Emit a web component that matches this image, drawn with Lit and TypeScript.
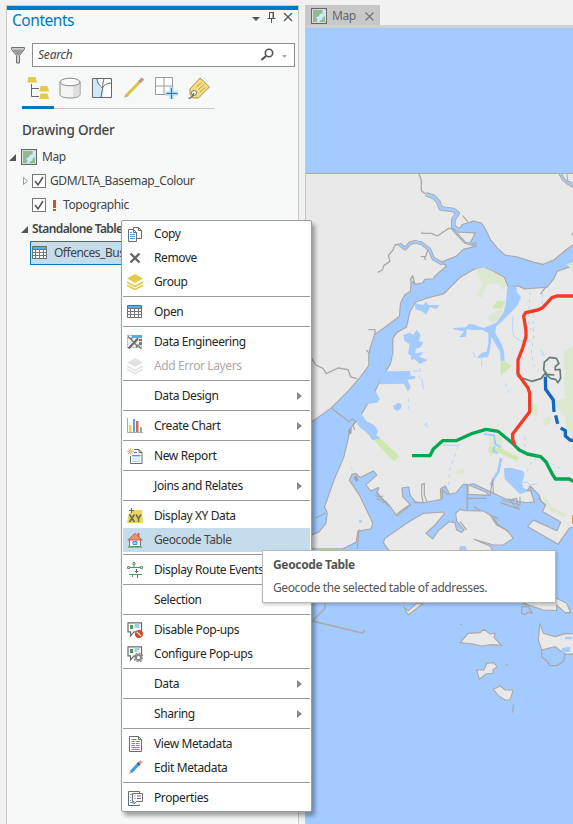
import { LitElement, html, svg, css, nothing } from "lit";
import { customElement, property } from "lit/decorators.js";

const G = "#6b6b6b";
const icons: Record<string, unknown> = {
  copy: svg`<path d="M6.500 12.500v-11h5l3 3v8z" fill="#fff" stroke="${G}"/><path d="M11.500 1.500v3h3" fill="none" stroke="${G}"/><path d="M1.500 15.500v-12h5l3 3v9z" fill="#fff" stroke="${G}"/><path d="M6.500 3.500v3h3" fill="none" stroke="${G}"/><path d="M3 8.500h5M3 10.500h5M3 12.500h5M3 6.500h2" stroke="#4a9bd4"/>`,
  remove: svg`<path d="M3.500 3.500l9 9M12.500 3.500l-9 9" stroke="#666" stroke-width="2.400"/>`,
  group: svg`<path d="M0 4.500L8 0l8 4.500L8 9z" fill="#e3cb45"/><path d="M0 8l8 4.500L16 8M0 11.200l8 4.300 8-4.300" fill="none" stroke="#e3cb45" stroke-width="1.700"/>`,
  error: svg`<path d="M0 4.500L8 0l8 4.500L8 9z" fill="#e3e3e3"/><path d="M0 8l8 4.500L16 8M0 11.200l8 4.300 8-4.300" fill="none" stroke="#e3e3e3" stroke-width="1.700"/>`,
  table: svg`<path d="M.5 1.500h14v12H.5z" fill="#fff" stroke="${G}"/><path d="M1 2h13v2.500H1z" fill="#55aee8"/><path d="M0 4.500h15M0 7.500h15M0 10.500h15M3.500 4.500v9M7.500 4.500v9M11.500 4.500v9" stroke="#777"/>`,
  engineering: svg`<path d="M.5 1.500h14v12H.5z" fill="#eee" stroke="#aaa" stroke-dasharray="2 1"/><path d="M5 1h10v3H5z" fill="#55aee8"/><path d="M8 5h3v2H8z" fill="#e6c832"/><path d="M12 5h3v2h-3z" fill="#d8482b"/><path d="M12 8h3v3h-3z" fill="#5a9a56"/><path d="M11 4.500l-9.500 10" stroke="#666" stroke-width="2"/><path d="M3.500 4.500l7 8" stroke="#777" stroke-width="1.300"/><path d="M1 2.500l2.500 2.500 2-1.500M9 13.500l2-2.500 3.500 4" fill="none" stroke="#777" stroke-width="1.300"/>`,
  chart: svg`<path d="M.5 0v14.500H16" fill="none" stroke="#aaa"/><path d="M2 7h2.500v7H2z" fill="#e6cf4a"/><path d="M6 1h2v13H6z" fill="#4aa6e4"/><path d="M9 3h2.500v11H9z" fill="#d9684a"/><path d="M13 9h2v5h-2z" fill="#88b98a"/>`,
  report: svg`<path d="M7 1.500h5l3 3v11H3.500V8" fill="#fff" stroke="${G}"/><path d="M12 1.500v3h3M7 4.500h3" fill="none" stroke="${G}"/><path d="M5 7h8.500v7H5z" fill="#b9dcf3"/><path d="M5 7.500h8.500" stroke="#4a9bd4"/><path d="M5 10h8.500M5 12h8.500" stroke="#fff"/><path d="M3.500 0v7M0 3.500h7M1 1l5 5M6 1L1 6" stroke="#e0c95e"/>`,
  xy: svg`<path d="M6 2h9l1 13H0L1.500 6z" fill="#ecd655"/><path d="M4.500 0v5M2 2.500h5" stroke="#666"/><path d="M2.500 6.500l5 7.500M7.500 6.500l-5 7.500M9 6.500l2.500 4v3.500M14 6.500l-2.500 4" fill="none" stroke="#666" stroke-width="1.500"/>`,
  house: svg`<path d="M2.500 8v6.500h11V8" fill="#fff" stroke="#777"/><path d="M10.500 1h2v4h-2z" fill="#d9603f"/><path d="M.8 8L8 1.500 15.200 8z" fill="#e99179" stroke="#cf5f43"/><path d="M6 9.500h4v3H6z" fill="#9bd0f4" stroke="#3b97d3"/><path d="M1 15h14" stroke="#55a855" stroke-width="1.300"/>`,
  route: svg`<path d="M2 5.500h12M7 3v3M2 12.500h13M5.500 12.500v2.500M10.500 12.500v3.500" stroke="#4f9457" fill="none"/><path d="M.6 4.600h2v2h-2zM13.400 4.600h2v2h-2zM6 .6h2v2H6z" fill="#fff" stroke="#4f9457"/><path d="M9.500 7v4M7.800 9.500h3.400" stroke="#666"/>`,
  popOff: svg`<path d="M1 .8h13.500v9H7l-3.500 4V9.800H1z" fill="#fff" stroke="${G}" stroke-width="1.200"/><path d="M3 3h3v4H3z" fill="#4c9a5a"/><path d="M7.500 3h5M7.500 5h5" stroke="#4a9bd4"/><circle cx="12" cy="12" r="4" fill="#cf4a26"/><path d="M9.800 9.800l4.400 4.400" stroke="#fff" stroke-width="1.200"/>`,
  popCfg: svg`<path d="M1 .8h13.500v9H7l-3.500 4V9.800H1z" fill="#fff" stroke="${G}" stroke-width="1.200"/><path d="M3 3h3v4H3z" fill="#4c9a5a"/><path d="M7.500 3h5M7.500 5h3" stroke="#4a9bd4"/><circle cx="11.500" cy="11.500" r="4.300" fill="none" stroke="#888" stroke-width="1.500" stroke-dasharray="1.900 1.400"/><circle cx="11.500" cy="11.500" r="2.600" fill="#fff" stroke="#888" stroke-width="2"/>`,
  view: svg`<path d="M2.500.5h9l3 3v12h-12z" fill="#fff" stroke="${G}"/><path d="M11.500.5v3h3" fill="none" stroke="${G}"/><path d="M4.500 3.500h5M4.500 5.500h3M9 5.500h3.500M4.500 7.500h3.500M9 7.500h3.500M4.500 9.500h3.500M9 9.500h3.500M4.500 11.500h8M4.500 13.500h8" stroke="#3f9fe0"/>`,
  edit: svg`<path d="M1.500 14.500L4 10.500l2 2z" fill="#c9a886"/><path d="M4 12L11.500 4" stroke="#3e9ddd" stroke-width="3.200"/><path d="M11 4.500l1.500-1.500" stroke="#555" stroke-width="3.400"/><path d="M12.600 2.900L14.500 1.200" stroke="#dea08f" stroke-width="3"/>`,
  props: svg`<path d="M6 15.500H1.500V1.500h11V3M1.500 15.500h11v-1" fill="none" stroke="${G}"/><path d="M3 4.500h2M3 7.500h1M3 10.500h1M3 12.500h3" stroke="#4a9bd4"/><path d="M5.500 3.500h10v8H9.500l-2.500 2.500v-2.500H5.500z" fill="#fff" stroke="${G}"/><path d="M7.500 6h1M10 6h4M7.500 8.500h1M10 8.500h4" stroke="#7b5f8d"/>`,
  map: svg`<path d="M.6.6h14.800v14.800H.6z" fill="#fff" stroke="#666" stroke-width="1.200"/><path d="M2 2h12v12H2z" fill="#8fba92"/><path d="M11.500 2H14v6l-2 1-1 3-2 .5L8.500 14H5.500l1-2.500-1.500-2L8 8l1-2 2.500-1z" fill="#cfe8f8"/>`,
  list: svg`<path d="M1.500 0h7l1.500 5.500H0zM13.500 9h7L22 14.500H12.500zM13.500 16.500h7L22 22H12.500z" fill="#e3cb45"/><path d="M4.500 7v12.500h7.500M4.500 11.500h7.500" fill="none" stroke="#666"/>`,
  source: svg`<path d="M1 5v12.500C1 19.500 5 21 11 21s10-1.500 10-3.500V5z" fill="#f3f3f3" stroke="#888"/><path d="M14 8.500c4 0 6.500-2 6.500-2V18s-2 2-6.500 2z" fill="#dedede"/><ellipse cx="11" cy="5" rx="10" ry="3.800" fill="#fafafa" stroke="#888"/>`,
  select: svg`<path d="M1.600 1.600h18.800v18.800H1.600z" fill="#fff"/><path d="M2 2h5l2 6 4 4-1 8.500H2z" fill="#cfe9f8"/><path d="M6 1.500c0 5 3 7 4.500 8.500s1 2 .5 4-.5 4-1 6M11 11c3-4 6-4.500 9.500-5M12 10.500c-1-3 .5-6 1-9" fill="none" stroke="#666"/><path d="M1.500 1.500h19v19h-19z" fill="none" stroke="#666"/>`,
  pencil: svg`<path d="M1 21l2-5 3 3z" fill="#bbb296"/><path d="M4 18L17 4.500" stroke="#dcc545" stroke-width="3.200"/><path d="M16.500 5L18 3.500" stroke="#999" stroke-width="3.300"/><path d="M18 3.500l2-2" stroke="#dc8a7d" stroke-width="3.200"/>`,
  snap: svg`<path d="M.5.5h17v17H.5zM9 .5v17M.5 9h17" fill="#fff" stroke="#999"/><path d="M16.500 10v13M10.500 16.500h13" stroke="#a9d8f5" stroke-width="4"/><path d="M16.500 11v11M11.500 16.500h11" stroke="#3d7795"/>`,
  tag: svg`<path d="M12 1l9.500 9-11 11H5l-3-3.500V12z" fill="#f1dc85" stroke="#b1923c"/><path d="M8.500 10l5-4.500M10 13l6-5.500M12 15l5.500-4.500" stroke="#bfa148"/><circle cx="6" cy="16" r="2.500" fill="#fff" stroke="#777"/><path d="M6 16c-1 3-3 5-5.500 5.500" fill="none" stroke="#666" stroke-width="1.300"/>`,
  filter: svg`<path d="M.6.600h12.800v1.800L8.400 8.500V16H5.600V8.500L.6 2.400z" fill="#ddd" stroke="#666"/><path d="M1.500 2.500h11L8 8.300H6z" fill="#999"/>`,
};

const icon = (name: string, w = 16, h = w) =>
  html`<svg width=${w} height=${h} viewBox="0 0 ${w} ${h}">${icons[name] ?? nothing}</svg>`;

@customElement("menu-item")
class MenuItem extends LitElement {
  @property() label = "";
  @property() icon = "";
  @property({ type: Boolean }) sub = false;
  static styles = css`
    :host { display: flex; align-items: center; height: 24px; padding-left: 4px; color: #262626; }
    :host([active]) { background: #c5dced; color: #444; }
    :host([off]) { color: #aaa; }
    .icon { width: 16px; height: 16px; margin-right: 11px; flex: none; }
    .label { flex: 1; white-space: nowrap; }
    .arrow { width: 0; border: 4px solid transparent; border-left: 5px solid #888; border-right: 0; margin-right: 8px; }
  `;
  render() {
    return html`<div class="icon">${this.icon ? icon(this.icon) : nothing}</div>
      <span class="label">${this.label}</span>${this.sub ? html`<i class="arrow"></i>` : nothing}`;
  }
}

// Chart coordinates are three units per pixel, origin at window point (300,170).
const seaPaths = [
  "M208 620V560L211 538 225 495 232 490 260 470 300 440 303 400 316 375 333 365 335 335 345 345 370 340 375 330 402 328 405 320 440 290 438 283 425 278 470 260 490 240 530 230 528 215 510 222 520 205 528 187 475 185 488 165 520 155 543 160 553 175 570 210 590 235 615 257 650 262 700 278 728 285 765 270 800 240 840 212V282L800 292 770 303 760 325 740 350 675 355 655 346 625 348 615 322 580 302 550 292 520 297 480 320 430 370 390 380 345 395 328 425 318 470 290 486 276 505 277 550 270 580 240 630 220 670 190 720 150 775 130 860 100 930 72 1010 80 1030 76 1060 55 1085 30 1095H0V770L35 758 95 715 150 660 180 625 210 585z",
  "M150 930L157 915 168 912 180 925 220 905 228 915 195 945 212 965 235 955 228 970 265 1005 290 1040 335 1005 310 980 308 955 325 953 328 975 345 997 370 1000 425 990 423 958 435 950 448 975 470 970 490 945 502 945 502 975 570 978 560 965 510 945 520 943 577 970 620 990 680 1000 705 997 690 950 715 975 722 995 735 1005 725 1025 780 1057 770 1080 700 1048 680 1070 775 1125 810 1075 840 1070V2100H0V1138L130 1138 170 1118 175 1085 215 1078 220 1058 180 975z"
];
const landPaths = [
  "M370 158L375 145 440 100 490 70 550 66 553 72 525 105 498 130 518 147 535 122 568 95 585 98 590 120 605 127 612 120 590 93 587 70 600 58 615 62 670 63 690 75 710 105 740 120 760 145 730 165 700 165 640 147 690 168 710 200 400 200z",
  "M600 458L625 430 660 428 672 418 690 432 705 430 702 442 724 466 695 464 665 468 638 462z",
  "M650 540L672 540 680 520 700 518 712 530 700 538 698 550 678 552 658 568z",
  "M700 598L720 588 735 600 760 600 750 630 735 630 712 614z",
  "M840 400L850 430 885 440 920 430 970 435V490L915 493 885 470 845 480 835 450z",
  "M790 340L850 360 890 362 890 345 915 368 932 368 920 340 880 320z",
  "M430 350L445 375 490 340 470 340 445 362z",
];

@customElement("map-canvas")
class MapCanvas extends LitElement {
  static styles = css`
    :host, svg { display: block; }
    .gray { fill: none; stroke: #a9a9a9; stroke-linejoin: round; }
    .sea { fill: #a3cbff; }
    .line { fill: none; stroke-linejoin: round; }
  `;
  river(d: string, w = 5) {
    return svg`<path class="gray" d=${d} stroke-width=${w + 5}/><path class="line" d=${d} stroke="#a3cbff" stroke-width=${w}/>`;
  }
  render() {
    return html`<svg width="267" height="796" viewBox="306 28 267 796">
      <path d="M306 28h267v796H306z" fill="#e9e9e9"/>
      <path d="M306 28h267v145H306z" fill="#a3cbff"/><path d="M306 173.500h267" stroke="#a9a9a9"/>
      <g transform="translate(300 170) scale(.33333)">
        ${seaPaths.map((d) => svg`<path class="gray" d=${d} stroke-width="7"/>`)}
        <path class="gray" stroke-width="4" d="M357 12L364 30V62L378 73M366 185v5h28l18 8 18-12 15-10 15-2M300 222l-15 3-6 15-14 16 5 18-18 12-5 14-14 7M383 240l-6 20-15 0M377 270l-4-8M488 137l15 18M345 345l-7-28-8 15M225 495v-16h-20M208 570v-20l-9-10M35 565l12 20 22 10 10 16 25-12 10-5 30 5 8 22 20 5M722 372l8-12 12-14 18-22M765 268l5 33M819 190l-5 5"/>
        ${this.river("M378 73L400 80 415 95 422 115 460 120 473 130 460 148 460 170 480 182", 9)}
        ${this.river("M298 222L315 236 330 220 345 215 365 220 388 238 400 266 428 282", 6)}
        ${this.river("M455 175L495 218 530 228", 2)}
        ${this.river("M780 10L790 28 805 40 822 50", 5)}
        <path class="gray" stroke-width="3" d="M800 10l4 24 18 5"/>
        ${seaPaths.map((d) => svg`<path class="sea" d=${d}/>`)}
        <g fill="#dde8d0">
          <path d="M525 298L550 292 580 305 610 322 620 345 605 360 595 340 560 345 545 385 530 375 548 342z"/>
          <path d="M575 430L605 418 612 440 575 458 560 445zM800 282l20 -5v30zM790 545l30-18v40zM792 540L822 540V810L800 790 795 740 765 710 772 690 795 685zM690 700l25 5-5 35-15-10zM730 745l22-5v20l-20 10zM725 980l15 0 15 30 45 25-5 8-45-20zM565 800l40-10 5 50-40 20zM470 903l25-10 -5 18-22 2z"/>
        </g>
        <path d="M575 415L592 392 617 393 605 415zM602 572L618 576 635 588 602 617zM177 765L215 780 298 858 282 875 235 825zM565 832L600 835 658 862 650 872 600 850 565 848z" fill="#cfe8b0"/>
        <g fill="#a3cbff">
          <path d="M622 348L650 350 650 365 663 382 655 402 640 420 610 450 588 470 586 490 603 518 612 545 614 573 602 572 600 545 585 520 575 500 570 540 563 562 530 564 545 548 560 545 565 520 565 490 548 480 525 480 500 478 498 500 478 502 492 484 460 478 460 474 498 472 508 461 528 466 550 474 572 466 590 457 610 430 618 400z"/>
          <path d="M345 400l25 5 8-10 8 10 32 0-8 12-20-5-12 22-12-10-20-6zM310 495l18-7 12 6 10-14 12 14-6 20 14 2-8 16-14 4-2 14 24-4-12 14 24 10-22 12-16-14-10 2-2-14-8-4 5-30-16-10zM246 604l84-1 2 14 14 2-2 8-22 2 10 22-8 14-12-24-74 2 5-22zM205 666l22-2 12 22-6 12-34 4-8-8zM170 735l12-6 18 25 22 11 13 17-7 14 13 10-24 4-14-20-24-18-12-20zM280 705l8 0 2-6 15 2-2 14-10 8-12-6z"/>
          <path d="M612 895l22-2 35 10 5 10-8 25 4 16 20 8-30 10-46-45z"/>
        </g>
        <g class="line" stroke="#b4d4fa" stroke-width="3">
          <path d="M340 603h20v-8M355 620l10 8 6 28M545 563v28M525 562l-5-16M430 826h50M660 937l22 0 8 8 22-4"/>
          <path stroke-dasharray="10 12" d="M690 365l-3 50v55l15 20M727 370v35M700 430v80l-6 35 6 40 18 20M616 640l6 20 12 16M675 800v30M680 905l15-30 25-20M735 870l45 24M446 945l3-45 25-70M325 685v40M282 510l-4 60"/>
          <path d="M638 440v42l4 18 20 12 30 2M720 540l8 6 0 10 8-2M372 765l8-6v14M152 892l6 10"/>
        </g>
        <path class="line" d="M603 865L595 905 582 925 572 945" stroke="#a3cbff" stroke-width="8"/>
        <path class="line" d="M552 792l30 4 4 26 16 10M584 828l-4 14 12 8" stroke="#a3cbff" stroke-width="6"/>
        <path class="gray" stroke-width="3.500" d="M370 1000l-5-25 0-30 8-5 0 35 8 20M445 975l-18-15 0 28M570 978l8-50 2 42M605 990l55 15 0-25M625 985l25 30M690 950l-8 12 14 0M735 1005l-20-20M95 715l52 40 10-8 12 8-10 10 5 15M230 965l35 45M47 1044l30-15M177 1078l-5 60M340 997l30 2M500 985h60M240 985l10-8"/>
        <path d="M160 922l10-6 6 14-8 6zM145 778l10-4v16l-10 4z" fill="#a3a3a3"/>
        <path class="gray" stroke-width="5" d="M502 945v85"/>
        <g transform="translate(-120 960)">
          ${landPaths.map((d) => svg`<path d=${d} fill="#e9e9e9" stroke="#a9a9a9" stroke-width="3.500"/>`)}
          <path class="gray" stroke-width="4" d="M157 393l150 36 8-8M160 390l35-35v-20M600 401l5 4M738 526l4-5M757 668l4-25M785 350v20l10 4 10-8 12 4-12-20zM845 480l0 20 15 12 10 15 20 0 20-12 6-25M345 15l15 8M350 25l15 8M365 38l15-4M410 72l40-28M720 38l60 20M750 30l20-5 5 30M640 50l20 10M700 80l12 22 35 25M600 95l20 25M690 75l25 10"/>
          <path d="M596 180l5-12 15 0 5 12zM905 475l25-5 0 15-25 5zM915 440h20v8h-20zM770 0h25l-8 6h-10zM298 90h7v8h-7z" fill="#a3cbff"/>
          <path d="M936 75h10v27h-10z" fill="#f5a12d"/>
        </g>
        <path class="line" stroke="#657d78" stroke-width="5" d="M652 598l3 22 40 14 28-8 15-20M735 612l18 14 14 2 7 10 8-14-2-26-14 2 0-10 11-10-8-15-20-3-16 15-2 22 10 14 22 2"/>
        <path class="line" stroke="#1468bd" stroke-width="10" d="M736 620l1 38 23 32 2 36M767 736l6 26M782 774l14 8 0 16 14 12 12 2"/>
        <path class="line" stroke="#00a651" stroke-width="10" d="M336 857h54l10-20 28-25h40l50-22 40-12 36 6 44 36 20 20 24 12 40 8 16 16 20 38 8 13 42 0 14 8"/>
        <path class="line" stroke="#f33b26" stroke-width="10" d="M822 378h-52l-14 5-28 30-15 7-36 8-6 10 7 44 0 18-10 34-14 36 0 42 30 42 5 15v56l-51 67v14l6 20"/>
      </g>
    </svg>`;
  }
}

type Row = [string, string?, ("sub" | "active" | "off")?];
const groups: Row[][] = [
  [["Copy", "copy"], ["Remove", "remove"], ["Group", "group"]],
  [["Open", "table"]],
  [["Data Engineering", "engineering"], ["Add Error Layers", "error", "off"]],
  [["Data Design", "", "sub"]],
  [["Create Chart", "chart", "sub"]],
  [["New Report", "report"]],
  [["Joins and Relates", "", "sub"]],
  [["Display XY Data", "xy"], ["Geocode Table", "house", "active"]],
  [["Display Route Events", "route"]],
  [["Selection", ""]],
  [["Disable Pop-ups", "popOff"], ["Configure Pop-ups", "popCfg"]],
  [["Data", "", "sub"]],
  [["Sharing", "", "sub"]],
  [["View Metadata", "view"], ["Edit Metadata", "edit"]],
  [["Properties", "props"]],
];

@customElement("app-root")
class AppRoot extends LitElement {
  static styles = css`
    :host { display: flex; position: relative; width: 573px; height: 824px; overflow: hidden; box-sizing: border-box;
      padding: 5px 0 0 6px; background: #f1f1f1; font: 12px/16px "Noto Sans", "Open Sans", sans-serif; letter-spacing: -0.39px; color: #444; }
    svg { display: block; flex: none; }
    .panel { width: 291px; flex: none; border: 1px solid #c8c8c8; border-bottom: 0; background: #f7f9f9; }
    .bar { height: 4px; background: #0079c1; }
    .head { display: flex; align-items: center; height: 20px; padding: 0 4px 0 5px; }
    .title { flex: 1; font-size: 15.500px; line-height: 20px; color: #0079c1; letter-spacing: -0.45px; }
    .head svg { margin-top: -4px; }
    .search { display: flex; align-items: center; margin-top: 13px; padding-left: 4px; }
    .box { display: flex; align-items: center; box-sizing: border-box; width: 263px; height: 24px; margin-left: 7px; padding: 0 6px 0 5px; border: 1px solid #8d8d8d; background: #fff; }
    .box em { flex: 1; letter-spacing: -0.2px; }
    .tools { display: flex; align-items: center; width: 192px; height: 42px; margin-left: 15px; box-sizing: border-box; border-bottom: 1px solid #c4c4c4; position: relative; gap: 10px; padding-left: 5px; }
    .tools::after { content: ""; position: absolute; left: 0; bottom: -1px; width: 32px; height: 3px; background: #0079c1; }
    .order { margin: 12px 0 6px 15px; font: 500 13.500px/18px "Noto Sans", sans-serif; letter-spacing: -0.25px; }
    .row { display: flex; align-items: center; height: 24px; white-space: nowrap; }
    .open { width: 0; border-left: 7px solid transparent; border-bottom: 7px solid #555; }
    .check { width: 12px; height: 12px; border: 1px solid #777; background: #fff; }
    .r1 { padding-left: 2px; gap: 5px; }
    .r2 { padding-left: 16px; gap: 4px; }
    .r3 { padding-left: 25px; gap: 7px; }
    .r4 { padding-left: 14px; gap: 4px; font-weight: 600; letter-spacing: -0.6px; }
    .picked { margin-left: 23px; width: 210px; box-sizing: border-box; padding-left: 1px; gap: 6px; border: 1px solid #0079c1; background: #c5dced; letter-spacing: -0.5px; }
    .bang { width: 3px; height: 11px; background: linear-gradient(#d0522c 8px, transparent 8px 9px, #d0522c 9px); }
    .view { flex: 1; margin-left: 6px; border-left: 1px solid #c8c8c8; }
    .tabs { height: 20px; border-bottom: 3px solid #cfcfcf; }
    .tab { display: flex; align-items: center; box-sizing: border-box; width: 74px; height: 20px; padding: 2px 6px 0 5px; background: #c8c8c8; color: #666; }
    .tab span { flex: 1; margin-left: 5px; }
    .menu { position: absolute; left: 121px; top: 220px; width: 191px; height: 592px; box-sizing: border-box; border: 1px solid #9a9ea4; border-radius: 2px; padding: 1px; background: #fff; box-shadow: 3px 4px 4px rgba(0,0,0,.35); }
    .sep { height: 1px; margin: 2px 0 3px; background: #999; }
    .tip { position: absolute; left: 262px; top: 550px; width: 294px; height: 53px; box-sizing: border-box; padding: 6px 10px; border: 1px solid #b8b8b8; background: #fff; color: #555; box-shadow: 1px 2px 3px rgba(0,0,0,.2); white-space: nowrap; letter-spacing: -0.41px; }
    .tip b { display: block; margin-bottom: 7px; letter-spacing: -0.35px; }
  `;
  render() {
    const check = html`<div class="check"><svg width="12" height="12"><path d="M2 6l3 4 5-8" fill="none" stroke="#555" stroke-width="1.500"/></svg></div>`;
    return html`
      <section class="panel">
        <div class="bar"></div>
        <div class="head"><span class="title">Contents</span>
          <svg width="42" height="14"><path d="M0 6h8l-4 4z" fill="#555"/><path d="M17 1.500h5M17.500 1v6M21.500 1v6M15.500 7.500h8M19.500 8v4" stroke="#555"/><path d="M21 1v6" stroke="#555"/><path d="M32 2l8 8M40 2l-8 8" stroke="#555" stroke-width="1.300"/></svg>
        </div>
        <div class="search">${icon("filter", 14, 17)}
          <div class="box"><em>Search</em><svg width="27" height="14"><circle cx="8" cy="5" r="3.700" fill="none" stroke="#555" stroke-width="1.600"/><path d="M5 8l-4.500 4" stroke="#555" stroke-width="2"/><path d="M21 7h5l-2.500 3z" fill="#aaa"/></svg></div>
        </div>
        <div class="tools">${["list", "source", "select", "pencil", "snap", "tag"].map((n) => icon(n, n === "snap" ? 23 : 22, 22))}</div>
        <div class="order">Drawing Order</div>
        <div class="row r1"><i class="open"></i>${icon("map")}<span>Map</span></div>
        <div class="row r2"><svg width="5" height="8"><path d="M.5.5v7l4-3.500z" fill="#fff" stroke="#999"/></svg>${check}<span>GDM/LTA_Basemap_Colour</span></div>
        <div class="row r3">${check}<i class="bang"></i><span>Topographic</span></div>
        <div class="row r4"><i class="open"></i><span>Standalone Tables</span></div>
        <div class="row picked">${icon("table")}<span>Offences_Bus</span></div>
      </section>
      <section class="view">
        <div class="tabs"><div class="tab">${icon("map")}<span>Map</span><svg width="9" height="9"><path d="M.5.5l8 8M8.500.5l-8 8" stroke="#777" stroke-width="1.300"/></svg></div></div>
        <map-canvas></map-canvas>
      </section>
      <div class="menu">${groups.map((g, i) => html`${i ? html`<div class="sep"></div>` : nothing}${g.map(([label, ic, state]) => html`
        <menu-item label=${label} icon=${ic ?? ""} ?sub=${state === "sub"} ?active=${state === "active"} ?off=${state === "off"}></menu-item>`)}`)}</div>
      <div class="tip"><b>Geocode Table</b>Geocode the selected table of addresses.</div>
    `;
  }
}
